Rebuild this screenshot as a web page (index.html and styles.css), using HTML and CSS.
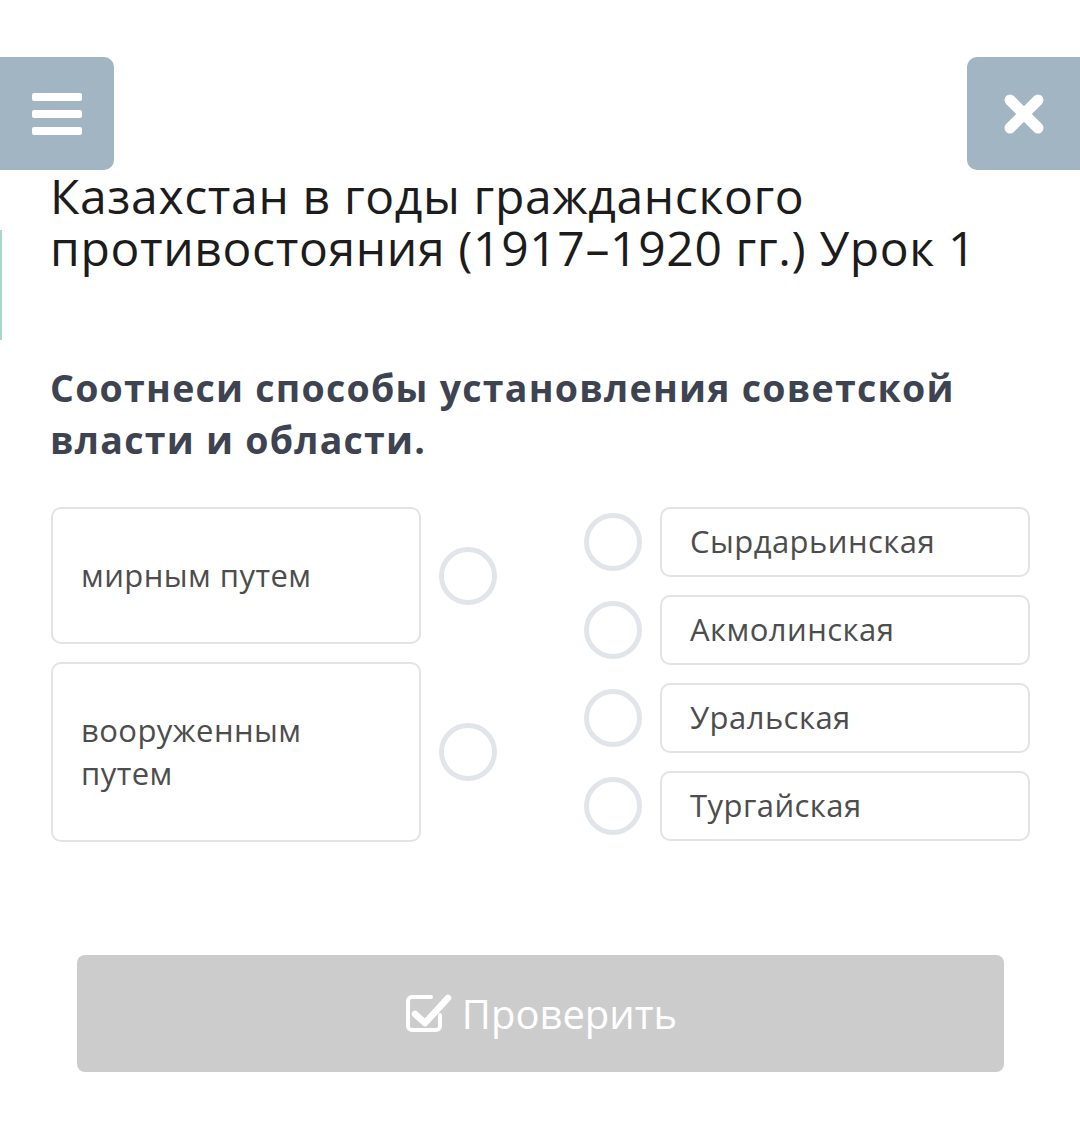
FILE: index.html
```html
<!DOCTYPE html>
<html lang="ru">
<head>
<meta charset="utf-8">
<link rel="stylesheet" href="styles.css">
</head>
<body>
<div class="page">
  <div class="edge-mark"></div>
  <header class="topbar">
    <button class="menu-btn" aria-label="menu">
      <span class="bar"></span><span class="bar"></span><span class="bar"></span>
    </button>
    <button class="close-btn" aria-label="close">
      <svg width="40" height="40" viewBox="0 0 40 40"><path d="M6 6 L34 34 M34 6 L6 34" stroke="#fff" stroke-width="11" stroke-linecap="round"/></svg>
    </button>
  </header>
  <main class="content">
    <h1 class="title">Казахстан в годы гражданского противостояния (1917–1920 гг.) Урок 1</h1>
    <h2 class="question">Соотнеси способы установления советской власти и области.</h2>
    <div class="match">
      <div class="left-col">
        <div class="left-item">
          <div class="card card-left">мирным путем</div>
          <span class="dot"></span>
        </div>
        <div class="left-item">
          <div class="card card-left tall">вооруженным<br>путем</div>
          <span class="dot"></span>
        </div>
      </div>
      <div class="right-col">
        <div class="right-item"><span class="dot"></span><div class="card card-right">Сырдарьинская</div></div>
        <div class="right-item"><span class="dot"></span><div class="card card-right">Акмолинская</div></div>
        <div class="right-item"><span class="dot"></span><div class="card card-right">Уральская</div></div>
        <div class="right-item"><span class="dot"></span><div class="card card-right">Тургайская</div></div>
      </div>
    </div>
    <div class="check-wrap">
      <button class="check-btn">
        <svg width="48" height="44" viewBox="0 0 48 44"><path d="M36 23 V34 A4 4 0 0 1 32 38 H8 A4 4 0 0 1 4 34 V9 A4 4 0 0 1 8 5 H27" fill="none" stroke="#fff" stroke-width="4" stroke-linecap="round"/><path d="M11 22 L21 31 L44 6" fill="none" stroke="#fff" stroke-width="6.5" stroke-linecap="round" stroke-linejoin="round"/></svg>
        <span>Проверить</span>
      </button>
    </div>
  </main>
</div>
</body>
</html>
```
FILE: styles.css
```css
* { box-sizing: border-box; }
html, body { margin: 0; padding: 0; background: #fff; }
body { font-family: "Open Sans", "Noto Sans", sans-serif; }
.page { position: relative; width: 1080px; min-height: 1136px; }
.edge-mark { position: absolute; left: 0; top: 230px; width: 2px; height: 110px; background: #a8d8c4; }
.topbar { display: flex; justify-content: space-between; padding-top: 57px; }
.menu-btn, .close-btn { border: 0; padding: 0; margin: 0; width: 114px; height: 113px; background: #a1b5c2; display: flex; align-items: center; justify-content: center; cursor: pointer; }
.menu-btn { border-radius: 0 10px 10px 0; flex-direction: column; gap: 9px; }
.close-btn { width: 113px; border-radius: 10px 0 0 10px; }
.bar { display: block; width: 50px; height: 8px; border-radius: 2px; background: #fff; }
.content { padding: 0 50px; }
.title { margin: 0; font-weight: 400; font-size: 48px; line-height: 52px; color: #1c1c1c; letter-spacing: 0.65px; }
.question { margin: 88px 0 0; font-weight: 700; font-size: 37.5px; line-height: 52px; color: #3d4350; letter-spacing: 1.25px; }
.match { display: flex; justify-content: space-between; margin-top: 41px; padding-left: 1px; }
.left-col, .right-col { display: flex; flex-direction: column; gap: 18px; }
.left-item { display: flex; align-items: center; gap: 18px; }
.right-item { display: flex; align-items: center; gap: 18px; }
.card { border: 2px solid #e3e3e3; border-radius: 10px; font-size: 31px; line-height: 43px; color: #4d4d4d; letter-spacing: 0.45px; }
.card-left { width: 370px; padding: 45px 28px; }
.card-right { width: 370px; height: 70px; padding: 11px 28px 10px; }
.dot { display: block; width: 58px; height: 58px; border: 5px solid #e1e5e9; border-radius: 50%; flex: none; }
.check-wrap { padding: 113px 26px 0 27px; }
.check-btn { width: 927px; height: 117px; border: 0; border-radius: 8px; background: #cccccc; color: #fff; font-family: inherit; font-size: 40px; display: flex; align-items: center; justify-content: center; gap: 10px; padding: 0; }
.check-btn svg { margin-top: 0; }
```
